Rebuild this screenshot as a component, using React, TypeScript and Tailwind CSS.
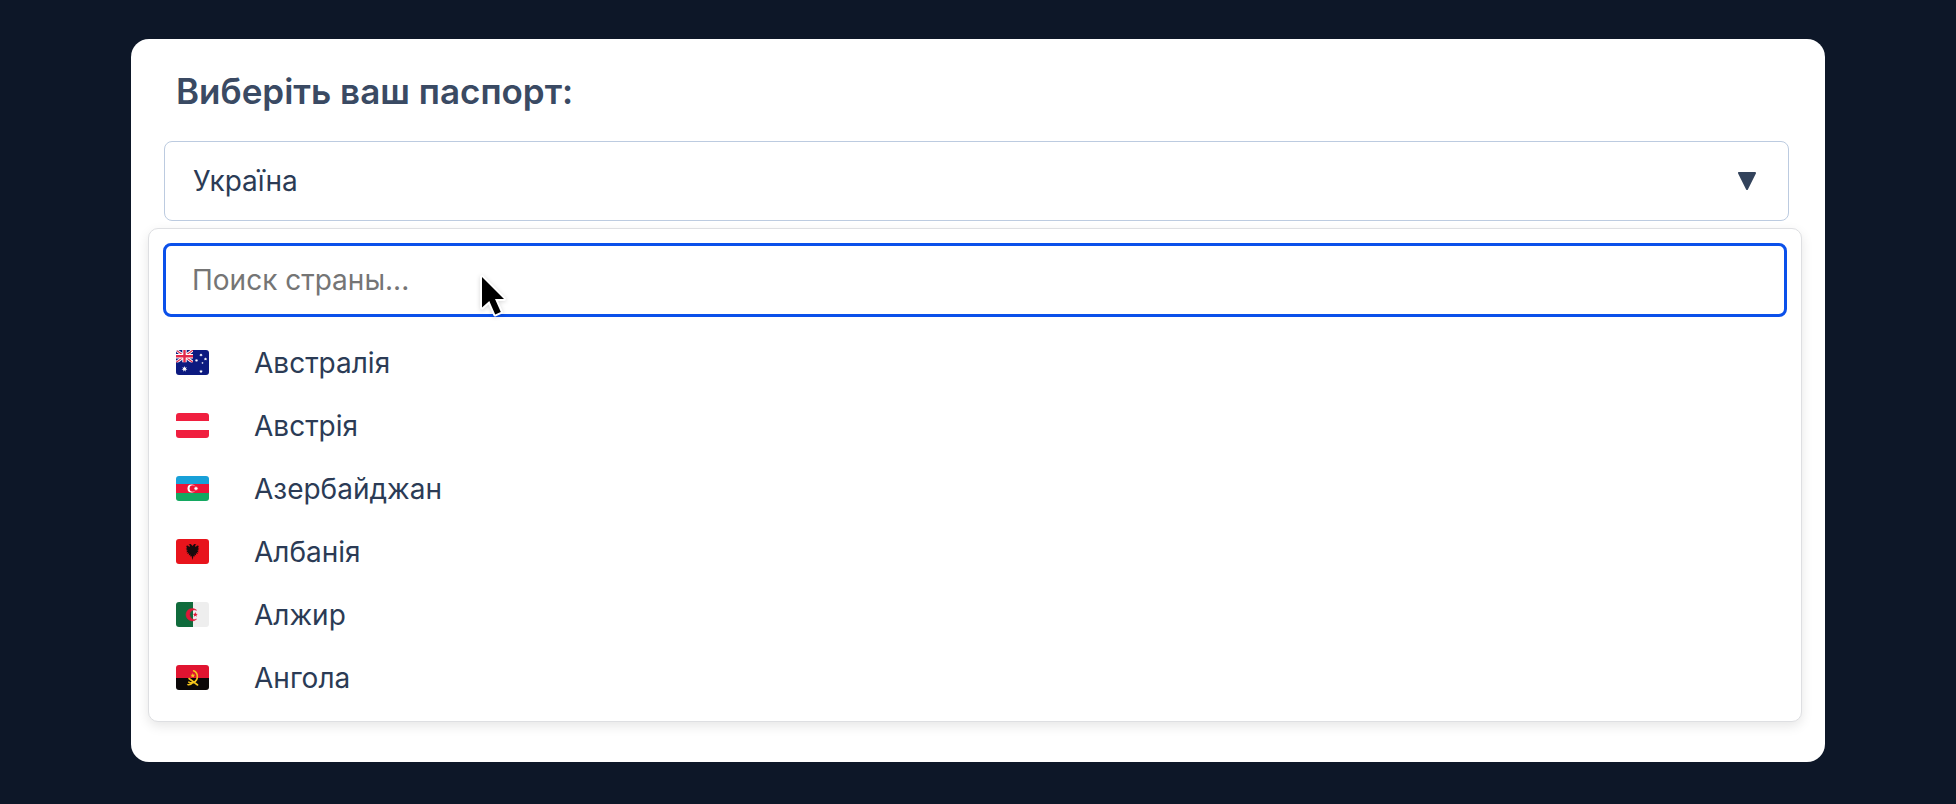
import { useState } from 'react';
import type { ReactNode } from 'react';

interface Country {
  code: string;
  name: string;
  flag: ReactNode;
}

// 5-point star path helper, used by several flags
function star(cx: number, cy: number, r: number, points = 5) {
  const out: string[] = [];
  for (let i = 0; i < points * 2; i++) {
    const radius = i % 2 === 0 ? r : r * 0.45;
    const a = (Math.PI / points) * i - Math.PI / 2;
    out.push(`${cx + radius * Math.cos(a)},${cy + radius * Math.sin(a)}`);
  }
  return out.join(' ');
}

const COUNTRIES: Country[] = [
  {
    code: 'AU',
    name: 'Австралія',
    flag: (
      <>
        <rect width="33" height="25" fill="#0c1a80" />
        <path d="M0 0L17 12.5M17 0L0 12.5" stroke="#fff" strokeWidth="3" />
        <path d="M0 0L17 12.5M17 0L0 12.5" stroke="#e2284a" strokeWidth="1.1" />
        <path d="M8.5 0V12.5M0 6.2H17" stroke="#fff" strokeWidth="4.4" />
        <path d="M8.5 0V12.5M0 6.2H17" stroke="#e2284a" strokeWidth="2.4" />
        <rect y="12.5" width="18" height="6" fill="#0c1a80" />
        <rect x="17" width="6" height="16" fill="#0c1a80" />
        <g fill="#fff">
          <polygon points={star(8.5, 19, 3, 7)} />
          <polygon points={star(25, 21.5, 1.9, 7)} />
          <polygon points={star(20.5, 10.5, 1.8, 7)} />
          <polygon points={star(25, 5, 1.8, 7)} />
          <polygon points={star(29.5, 9, 1.8, 7)} />
          <polygon points={star(26.5, 13, 1.2)} />
        </g>
      </>
    ),
  },
  {
    code: 'AT',
    name: 'Австрія',
    flag: (
      <>
        <rect width="33" height="25" fill="#f01f3f" />
        <rect y="8" width="33" height="9" fill="#fff" />
      </>
    ),
  },
  {
    code: 'AZ',
    name: 'Азербайджан',
    flag: (
      <>
        <rect width="33" height="9" fill="#18a0d8" />
        <rect y="8" width="33" height="9" fill="#ee1438" />
        <rect y="17" width="33" height="8" fill="#14a861" />
        <circle cx="15.5" cy="12.5" r="4" fill="#fff" />
        <circle cx="16.8" cy="12.5" r="3.2" fill="#ee1438" />
        <polygon points={star(20, 12.5, 2.4, 8)} fill="#fff" />
      </>
    ),
  },
  {
    code: 'AL',
    name: 'Албанія',
    flag: (
      <>
        <rect width="33" height="25" fill="#e8141c" />
        <path
          d="M16.5 7L14.8 5L12.6 5.4L14 6.8L13.4 8L11.8 6.6L10 7L11.2 8.4L9.6 9L11.4 10L9.8 11L11.6 11.6L10.2 13.2L12 13L11.2 15L13.2 14.2L12.8 16.4L14.6 15.4L14 17.6L15.5 17L16.5 21L17.5 17L19 17.6L18.4 15.4L20.2 16.4L19.8 14.2L21.8 15L21 13L22.8 13.2L21.4 11.6L23.2 11L21.6 10L23.4 9L21.8 8.4L23 7L21.2 6.6L19.6 8L19 6.8L20.4 5.4L18.2 5Z"
          fill="#180a0c"
        />
      </>
    ),
  },
  {
    code: 'DZ',
    name: 'Алжир',
    flag: (
      <>
        <rect width="17" height="25" fill="#106b3c" />
        <rect x="17" width="16" height="25" fill="#eeeeee" />
        <path
          d="M20.5 8.2A6.2 6.2 0 1 0 20.5 17.2A4.9 4.9 0 1 1 20.5 8.2Z"
          fill="#e01838"
          stroke="#e01838"
          strokeWidth="0.6"
        />
        <polygon points={star(19.3, 12.7, 2.6)} fill="#e01838" />
      </>
    ),
  },
  {
    code: 'AO',
    name: 'Ангола',
    flag: (
      <>
        <rect width="33" height="13" fill="#e01430" />
        <rect y="13" width="33" height="12" fill="#0b0708" />
        <path
          d="M17.6 5.8C22.6 8 22.6 15 17.6 17.4C15.6 18.2 14 18 12.8 17.2M13 13.5L21.6 20M12 19.6C13.6 20.4 15 19.4 17 17.4"
          fill="none"
          stroke="#f5c51c"
          strokeWidth="1.6"
          strokeLinecap="round"
        />
        <polygon points={star(16.8, 10.6, 2.5)} fill="#f5c51c" />
      </>
    ),
  },
];

function Flag({ children }: { children: ReactNode }) {
  return (
    <svg
      viewBox="0 0 33 25"
      className="h-[25px] w-[33px] shrink-0 overflow-hidden rounded-[3px]"
      aria-hidden="true"
    >
      {children}
    </svg>
  );
}

function Cursor() {
  return (
    <svg
      viewBox="0 0 28 44"
      className="pointer-events-none absolute top-[31px] left-[316px] h-11 w-7 drop-shadow-sm"
      aria-hidden="true"
    >
      <path
        d="M3 3V33.5L10.3 27L16.2 40.5L21.8 38L16 25H25Z"
        fill="#000"
        stroke="#fff"
        strokeWidth="4"
        strokeLinejoin="round"
        paintOrder="stroke"
      />
    </svg>
  );
}

export default function App() {
  const [open, setOpen] = useState(true);
  const [selected, setSelected] = useState('Україна');
  const [query, setQuery] = useState('');

  const visible = COUNTRIES.filter((c) =>
    c.name.toLowerCase().includes(query.toLowerCase())
  );

  const pick = (name: string) => {
    setSelected(name);
    setOpen(false);
  };

  return (
    <div className="min-h-screen bg-[#0d1728] px-[131px] pt-[39px] pb-10 font-['Inter','Noto_Sans',sans-serif] text-[28px] leading-9 text-[#2b3b55]">
      <main className="rounded-[18px] bg-white px-[17px] pt-8 pb-10">
        {/* Label */}
        <label
          htmlFor="passport"
          className="block px-7 text-[35px] leading-10 font-semibold text-[#3a4a63]"
        >
          Виберіть ваш паспорт:
        </label>

        {/* Current value */}
        <div className="mt-[30px] pr-[19px] pl-4">
          <button
            id="passport"
            type="button"
            aria-expanded={open}
            onClick={() => setOpen(!open)}
            className="flex h-20 w-full items-center justify-between rounded-lg border border-[#bccbe0] bg-white pr-[31px] pl-7"
          >
            <span>{selected}</span>
            <svg viewBox="0 0 20 20" className="h-5 w-5" aria-hidden="true">
              <path
                d="M2 2H18L10 18Z"
                fill="#33435c"
                stroke="#33435c"
                strokeWidth="2"
                strokeLinejoin="round"
              />
            </svg>
          </button>
        </div>

        {/* Dropdown */}
        {open && (
          <div className="mt-[7px] mr-[6px] rounded-[10px] border border-[#dedfe2] bg-white px-[14px] pt-[14px] pb-3 shadow-[0_4px_12px_rgba(0,0,0,0.1)]">
            <div className="relative">
              <input
                type="text"
                aria-label="Поиск страны"
                placeholder="Поиск страны..."
                value={query}
                onChange={(e) => setQuery(e.target.value)}
                className="block h-[74px] w-full rounded-lg border-[3px] border-[#0b50ea] bg-white px-[26px] outline-none placeholder:text-[#757575]"
              />
              <Cursor />
            </div>

            <ul className="mt-[14px]">
              {visible.map((country) => (
                <li key={country.code}>
                  <button
                    type="button"
                    onClick={() => pick(country.name)}
                    className="flex h-[63px] w-full items-center gap-[45px] px-[13px] text-left"
                  >
                    <Flag>{country.flag}</Flag>
                    <span>{country.name}</span>
                  </button>
                </li>
              ))}
            </ul>
          </div>
        )}
      </main>
    </div>
  );
}
